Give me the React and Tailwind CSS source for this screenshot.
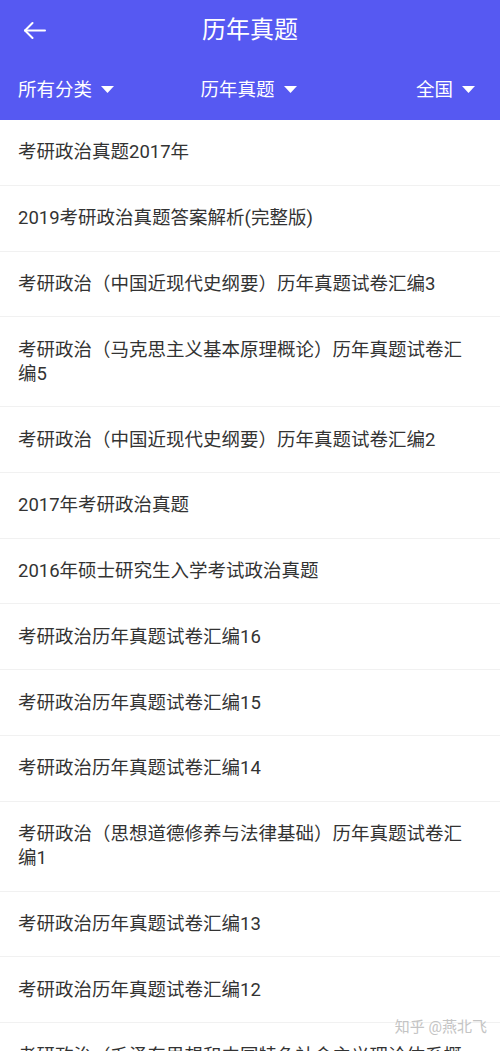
import React from "react";

const items = [
  "考研政治真题2017年",
  "2019考研政治真题答案解析(完整版)",
  "考研政治（中国近现代史纲要）历年真题试卷汇编3",
  "考研政治（马克思主义基本原理概论）历年真题试卷汇编5",
  "考研政治（中国近现代史纲要）历年真题试卷汇编2",
  "2017年考研政治真题",
  "2016年硕士研究生入学考试政治真题",
  "考研政治历年真题试卷汇编16",
  "考研政治历年真题试卷汇编15",
  "考研政治历年真题试卷汇编14",
  "考研政治（思想道德修养与法律基础）历年真题试卷汇编1",
  "考研政治历年真题试卷汇编13",
  "考研政治历年真题试卷汇编12",
  "考研政治（毛泽东思想和中国特色社会主义理论体系概论）历年真题试卷汇编1",
];

function Caret() {
  return (
    <svg width="13" height="7" viewBox="0 0 13 7" className="ml-[9px]">
      <path d="M0 0 H13 L6.5 7 Z" fill="#ffffff" />
    </svg>
  );
}

export default function App() {
  return (
    <div
      className="relative w-[500px] bg-white"
      style={{ fontFamily: 'Roboto, "Noto Sans CJK SC", sans-serif' }}
    >
      <div className="bg-[#5659F2] text-white">
        <div className="relative flex h-[59px] items-center justify-center">
          <svg
            width="24"
            height="18"
            viewBox="0 0 24 18"
            className="absolute left-[23px] top-[21px]"
            fill="none"
            stroke="#ffffff"
            strokeWidth="2"
            strokeLinecap="round"
            strokeLinejoin="round"
          >
            <path d="M22 9.5 H2" />
            <path d="M9.5 2 L2 9.5 L9.5 17" />
          </svg>
          <span className="text-[24px] leading-[30px]">历年真题</span>
        </div>
        <div className="flex h-[61px] items-center justify-between pl-[18px] pr-[25px] text-[18.5px] leading-[24px]">
          <div className="flex w-[150px] items-center">
            <span>所有分类</span>
            <Caret />
          </div>
          <div className="flex items-center pl-[4px]">
            <span>历年真题</span>
            <Caret />
          </div>
          <div className="flex w-[150px] items-center justify-end">
            <span>全国</span>
            <Caret />
          </div>
        </div>
      </div>
      <div>
        {items.map((t, i) => (
          <div
            key={i}
            className="border-b border-[#f1f1f1] py-[20.4px] pl-[18px] pr-[28px] text-[18.5px] leading-[24px] text-[#333333]"
          >
            {t}
          </div>
        ))}
      </div>
      <div className="absolute right-[13px] top-[1017px] text-[15px] leading-[20px] text-[#c4c4c4]">
        知乎 @燕北飞
      </div>
    </div>
  );
}
